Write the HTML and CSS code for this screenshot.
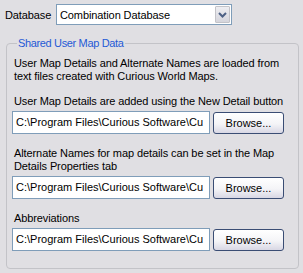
FILE: index.html
```html
<!DOCTYPE html>
<html>
<head>
<meta charset="utf-8">
<link rel="stylesheet" href="styles.css">
</head>
<body>
<div class="panel">
  <div class="db-row">
    <span class="db-label">Database</span>
    <div class="select">
      <span class="select-text">Combination Database</span>
      <span class="select-btn"><svg width="9" height="6" viewBox="0 0 9 6"><path d="M1 1 L4.5 4.5 L8 1" fill="none" stroke="#4d6185" stroke-width="2"/></svg></span>
    </div>
  </div>
  <fieldset class="group">
    <legend class="group-title">Shared User Map Data</legend>
    <p class="text intro">User Map Details and Alternate Names are loaded from text files created with Curious World Maps.</p>
    <p class="text">User Map Details are added using the New Detail button</p>
    <div class="file-row">
      <div class="input"><span class="input-text">C:\Program Files\Curious Software\Cu</span></div>
      <button class="btn">Browse...</button>
    </div>
    <p class="text">Alternate Names for map details can be set in the Map Details Properties tab</p>
    <div class="file-row">
      <div class="input"><span class="input-text">C:\Program Files\Curious Software\Cu</span></div>
      <button class="btn">Browse...</button>
    </div>
    <p class="text">Abbreviations</p>
    <div class="file-row last">
      <div class="input"><span class="input-text">C:\Program Files\Curious Software\Cu</span></div>
      <button class="btn">Browse...</button>
    </div>
  </fieldset>
</div>
</body>
</html>
```

FILE: styles.css
```css
html, body {
  margin: 0;
  padding: 0;
  background: #e0dfe3;
}
body {
  font-family: "Liberation Sans", Arial, sans-serif;
  font-size: 11px;
  letter-spacing: -0.1px;
  color: #000;
  width: 303px;
  height: 273px;
  overflow: hidden;
}
.panel {
  padding: 4px 5px 0 6px;
}
.db-row {
  display: flex;
  align-items: center;
  height: 21px;
}
.db-label {
  width: 51px;
  margin-left: -1px;
}
.select {
  box-sizing: border-box;
  width: 176px;
  height: 21px;
  border: 1px solid #7f9db9;
  background: #fff;
  display: flex;
  align-items: center;
  padding: 1px;
}
.select-text {
  flex: 1;
  padding-left: 2px;
}
.select-btn {
  box-sizing: border-box;
  width: 15px;
  height: 17px;
  border: 1px solid #c3c3c8;
  border-radius: 1px;
  background: linear-gradient(#eeeef2, #d5d5dc);
  display: flex;
  align-items: center;
  justify-content: center;
}
.group {
  box-sizing: border-box;
  width: 293px;
  margin: 12px 0 0 0;
  border: 1px solid #c3c3c8;
  border-radius: 4px;
  padding: 0 0 17px 5px;
  min-width: 0;
}
.group-title {
  color: #1f5ad6;
  padding: 0 1px;
  margin-left: 5px;
  line-height: 13px;
  letter-spacing: -0.35px;
}
.text {
  margin: 0;
  width: 272px;
  line-height: 13px;
  padding-left: 2px;
}
.intro {
  margin-top: 7px;
  margin-bottom: 12px;
}
.file-row {
  display: flex;
  align-items: center;
  gap: 3px;
  margin: 3px 0 13px;
}
.file-row.last {
  margin-bottom: 0;
}
.input {
  box-sizing: border-box;
  flex: none;
  width: 198px;
  height: 23px;
  border: 1px solid #7f9db9;
  background: #fff;
  padding: 4px 3px 0 3px;
}
.input-text {
  display: block;
  letter-spacing: 0;
  white-space: nowrap;
}
.btn {
  box-sizing: border-box;
  flex: none;
  width: 71px;
  height: 22px;
  font: inherit;
  color: #000;
  border: 1px solid #3a4d74;
  border-radius: 3px;
  background: linear-gradient(#ffffff 0%, #f4f4f7 55%, #d8d7e4 100%);
  padding: 0;
}
```
